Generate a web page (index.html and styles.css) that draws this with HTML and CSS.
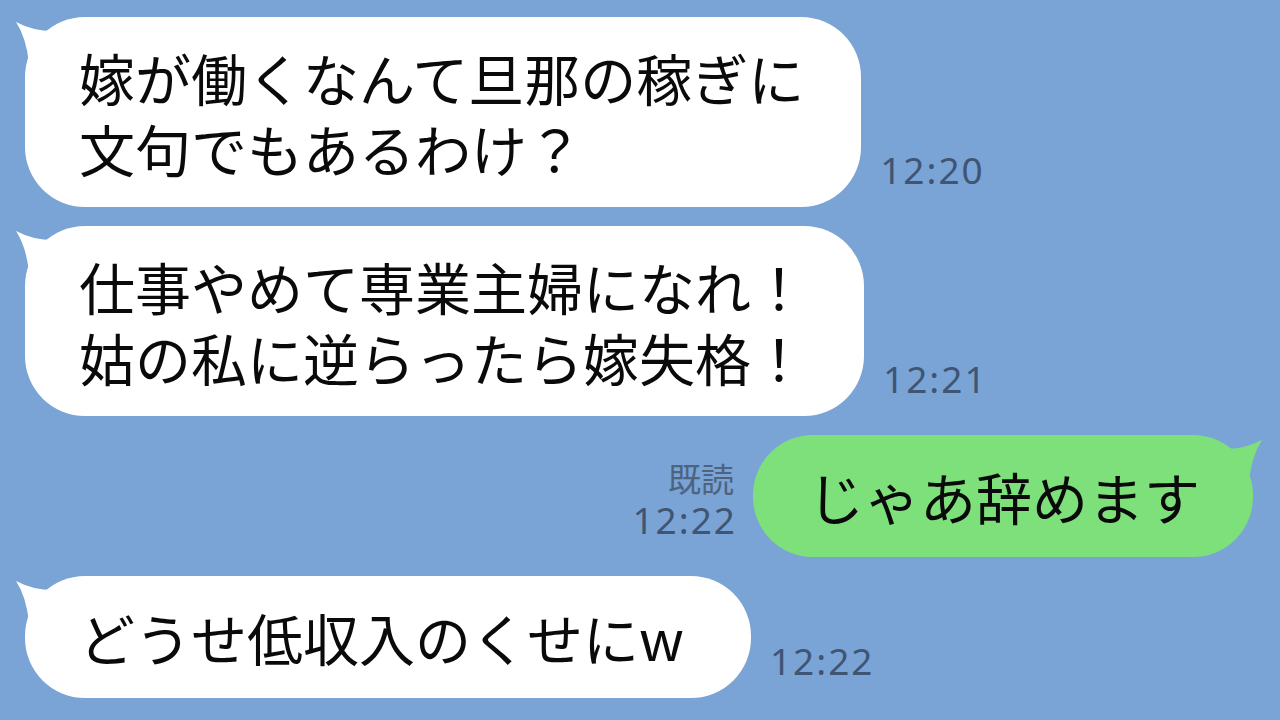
FILE: index.html
```html
<!DOCTYPE html>
<html lang="ja">
<head>
    <meta charset="UTF-8">
    <meta name="viewport" content="width=device-width, initial-scale=1.0">
    <title>トーク</title>
    <link rel="stylesheet" href="styles.css">
</head>
<body>

<div class="chat">
    <div class="row">
        <div class="bubble">
            <svg class="tail" viewBox="0 0 50 50" width="50" height="50"><path d="M3 5 Q22 15 44 14 L44 46 L16 46 Q13 20 3 5 Z"/></svg>
            <p>嫁が働くなんて旦那の稼ぎに<br>文句でもあるわけ？</p>
        </div>
        <div class="meta"><span class="time">12:20</span></div>
    </div>

    <div class="row">
        <div class="bubble">
            <svg class="tail" viewBox="0 0 50 50" width="50" height="50"><path d="M3 5 Q22 15 44 14 L44 46 L16 46 Q13 20 3 5 Z"/></svg>
            <p>仕事やめて専業主婦になれ！<br>姑の私に逆らったら嫁失格！</p>
        </div>
        <div class="meta"><span class="time">12:21</span></div>
    </div>

    <div class="row me">
        <div class="meta">
            <span class="read">既読</span>
            <span class="time">12:22</span>
        </div>
        <div class="bubble green">
            <svg class="tail" viewBox="0 0 50 50" width="50" height="50"><path d="M3 5 Q22 15 44 14 L44 46 L16 46 Q13 20 3 5 Z"/></svg>
            <p>じゃあ辞めます</p>
        </div>
    </div>

    <div class="row">
        <div class="bubble short">
            <svg class="tail" viewBox="0 0 50 50" width="50" height="50"><path d="M3 5 Q22 15 44 14 L44 46 L16 46 Q13 20 3 5 Z"/></svg>
            <p>どうせ低収入のくせにw</p>
        </div>
        <div class="meta"><span class="time">12:22</span></div>
    </div>
</div>

</body>
</html>
```

FILE: styles.css
```css
html, body {
    margin: 0;
    height: 100%;
}
body {
    background-color: #7aa4d5;
    font-family: "Noto Sans CJK JP", "Noto Sans", sans-serif;
    overflow: hidden;
}
.chat {
    display: flex;
    flex-direction: column;
    gap: 19px;
    padding: 17px 27px 0 25px;
}
.row {
    display: flex;
    align-items: flex-end;
    gap: 19px;
}
.row.me {
    justify-content: flex-end;
}
.bubble {
    position: relative;
    background-color: #fff;
    border-radius: 60px;
    padding: 24px 57px 24px 54px;
}
.bubble p {
    position: relative;
    margin: 0;
    font-size: 56px;
    line-height: 71px;
    color: #0a0a0a;
    white-space: nowrap;
}
.bubble.green {
    background-color: #7de07a;
    padding: 25px 53px 26px 55px;
}
.bubble.short {
    padding: 25px 67px 26px 54px;
}
.tail {
    position: absolute;
    left: -12px;
    top: 0;
    fill: #fff;
}
.green .tail {
    left: auto;
    right: -12px;
    fill: #7de07a;
    transform: scaleX(-1);
}
.meta {
    display: flex;
    flex-direction: column;
    align-items: flex-end;
    font-family: "Noto Sans", sans-serif;
    color: #3f5573;
    padding-bottom: 17px;
}
.me .meta {
    margin-right: -3px;
}
.time {
    font-size: 37px;
    line-height: 41px;
    letter-spacing: 2px;
}
.read {
    font-family: "Noto Sans CJK JP", sans-serif;
    font-size: 33px;
    line-height: 41px;
    margin-right: 3px;
    color: #4d6380;
}
```
